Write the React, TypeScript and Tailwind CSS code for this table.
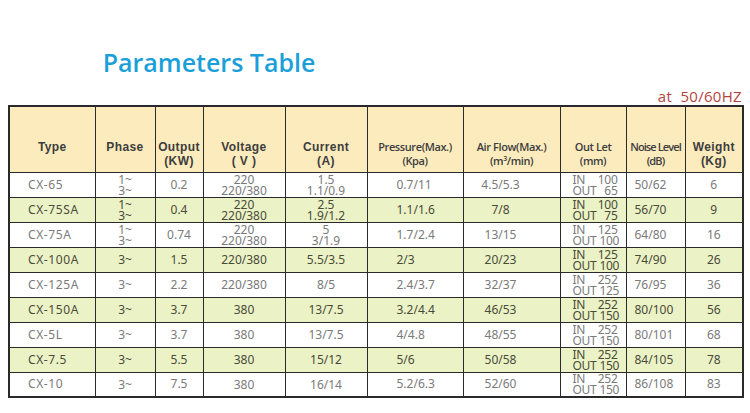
import React from 'react';

type Row = {
  type: string;
  phase: string[];
  output: string;
  voltage: string[];
  current: string[];
  pressure: string;
  airflow: string;
  outlet: [string, string];
  noise: string;
  weight: string;
};

const rows: Row[] = [
  { type: 'CX-65', phase: ['1~', '3~'], output: '0.2', voltage: ['220', '220/380'], current: ['1.5', '1.1/0.9'], pressure: '0.7/11', airflow: '4.5/5.3', outlet: ['100', '65'], noise: '50/62', weight: '6' },
  { type: 'CX-75SA', phase: ['1~', '3~'], output: '0.4', voltage: ['220', '220/380'], current: ['2.5', '1.9/1.2'], pressure: '1.1/1.6', airflow: '7/8', outlet: ['100', '75'], noise: '56/70', weight: '9' },
  { type: 'CX-75A', phase: ['1~', '3~'], output: '0.74', voltage: ['220', '220/380'], current: ['5', '3/1.9'], pressure: '1.7/2.4', airflow: '13/15', outlet: ['125', '100'], noise: '64/80', weight: '16' },
  { type: 'CX-100A', phase: ['3~'], output: '1.5', voltage: ['220/380'], current: ['5.5/3.5'], pressure: '2/3', airflow: '20/23', outlet: ['125', '100'], noise: '74/90', weight: '26' },
  { type: 'CX-125A', phase: ['3~'], output: '2.2', voltage: ['220/380'], current: ['8/5'], pressure: '2.4/3.7', airflow: '32/37', outlet: ['252', '125'], noise: '76/95', weight: '36' },
  { type: 'CX-150A', phase: ['3~'], output: '3.7', voltage: ['380'], current: ['13/7.5'], pressure: '3.2/4.4', airflow: '46/53', outlet: ['252', '150'], noise: '80/100', weight: '56' },
  { type: 'CX-5L', phase: ['3~'], output: '3.7', voltage: ['380'], current: ['13/7.5'], pressure: '4/4.8', airflow: '48/55', outlet: ['252', '150'], noise: '80/101', weight: '68' },
  { type: 'CX-7.5', phase: ['3~'], output: '5.5', voltage: ['380'], current: ['15/12'], pressure: '5/6', airflow: '50/58', outlet: ['252', '150'], noise: '84/105', weight: '78' },
  { type: 'CX-10', phase: ['3~'], output: '7.5', voltage: ['380'], current: ['16/14'], pressure: '5.2/6.3', airflow: '52/60', outlet: ['252', '150'], noise: '86/108', weight: '83' },
];

const widths = [86, 60, 48, 82, 82, 96, 97, 66, 59, 58];

const bold = "font-['Liberation_Sans',sans-serif] font-bold text-[12px] tracking-[0.4px]";
const narrow = "font-['Open_Sans',sans-serif] font-semibold text-[11px] tracking-[-0.4px]";

const headers: { lines: [React.ReactNode, React.ReactNode]; cls: string }[] = [
  { lines: ['Type', '\u00a0'], cls: bold },
  { lines: ['Phase', '\u00a0'], cls: bold },
  { lines: ['Output', '(KW)'], cls: bold },
  { lines: ['Voltage', '( V )'], cls: bold },
  { lines: ['Current', '(A)'], cls: bold },
  { lines: ['Pressure(Max.)', '(Kpa)'], cls: narrow },
  { lines: ['Air Flow(Max.)', <span key="m">(m<sup className="text-[7px]">3</sup>/min)</span>], cls: narrow },
  { lines: ['Out Let', '(mm)'], cls: narrow },
  { lines: ['Noise Level', '(dB)'], cls: narrow + ' tracking-[-0.9px]' },
  { lines: ['Weight', '(Kg)'], cls: bold },
];

function Stack({ lines }: { lines: string[] }) {
  return (
    <div className="flex flex-col items-center leading-[11px]">
      {lines.map((l, i) => (
        <span key={i}>{l}</span>
      ))}
    </div>
  );
}

export default function App() {
  return (
    <div className="w-[750px] h-[413px] bg-white overflow-hidden font-['Noto_Sans',sans-serif]">
      <div className="pt-[45px] w-[418px] text-center">
        <h1 className="font-['Open_Sans',sans-serif] font-semibold text-[25px] leading-[34px] text-[#1b9fd8]">
          Parameters Table
        </h1>
      </div>
      <div className="w-[742px] text-right mt-[7px] font-['Open_Sans',sans-serif] text-[15px] leading-[20px] text-[#b5443f] tracking-[0.3px]">
        at&nbsp; 50/60HZ
      </div>
      <div className="pl-[8px] mt-[-1px]">
        <table className="table-fixed border-collapse border-2 border-[#2a2a2a] w-[734px]">
          <colgroup>
            {widths.map((w, i) => (
              <col key={i} style={{ width: w }} />
            ))}
          </colgroup>
          <thead>
            <tr className="bg-[#fcecbd] h-[66px]">
              {headers.map((h, i) => (
                <th
                  key={i}
                  className={`border border-[#2a2a2a] align-bottom pb-[4px] px-0 text-center text-[#3d3d3d] leading-[14px] ${h.cls}`}
                >
                  <div>{h.lines[0]}</div>
                  <div>{h.lines[1]}</div>
                </th>
              ))}
            </tr>
          </thead>
          <tbody>
            {rows.map((r, i) => {
              const green = i % 2 === 1;
              const td = `border border-[#2a2a2a] h-[25px] p-0 align-middle text-[12px] ${green ? 'text-[#4a4a3a]' : 'text-[#7a7a7a]'}`;
              return (
                <tr key={r.type} className={green ? 'bg-[#ebf3c6]' : 'bg-white'}>
                  <td className={`${td} pl-[18px] tracking-[0.6px]`}>{r.type}</td>
                  <td className={`${td} text-[11px]`}>
                    <Stack lines={r.phase} />
                  </td>
                  <td className={`${td} text-center`}>{r.output}</td>
                  <td className={`${td} text-center`}>
                    <Stack lines={r.voltage} />
                  </td>
                  <td className={`${td} text-center`}>
                    <Stack lines={r.current} />
                  </td>
                  <td className={`${td} pl-[29px]`}>{r.pressure}</td>
                  <td className={`${td} text-center pr-[22px]`}>{r.airflow}</td>
                  <td className={`${td} text-[11px]`}>
                    <div className="w-[45px] ml-[12px] leading-[11px] tracking-[-0.3px]">
                      <div className="flex justify-between">
                        <span>IN</span>
                        <span>{r.outlet[0]}</span>
                      </div>
                      <div className="flex justify-between gap-[3px]">
                        <span>OUT</span>
                        <span>{r.outlet[1]}</span>
                      </div>
                    </div>
                  </td>
                  <td className={`${td} pl-[8px]`}>{r.noise}</td>
                  <td className={`${td} text-center`}>{r.weight}</td>
                </tr>
              );
            })}
          </tbody>
        </table>
      </div>
    </div>
  );
}
